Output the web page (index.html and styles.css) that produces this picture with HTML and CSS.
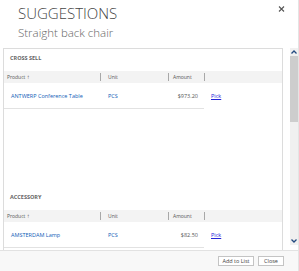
FILE: index.html
```html
<!DOCTYPE html>
<html lang="en">
<head>
  <meta charset="UTF-8">
  <title>Suggestions</title>
  <link rel="stylesheet" href="styles.css">
</head>
<body>
<div class="dialog">
  <!-- header -->
  <div class="header">
    <h1>SUGGESTIONS</h1>
    <p class="subtitle">Straight back chair</p>
    <a class="close-x" href="#">
      <svg width="7" height="6" viewBox="0 0 7 6"><path d="M1 0.5 L6 5.5 M6 0.5 L1 5.5" stroke="#555" stroke-width="1.1" fill="none"/></svg>
    </a>
  </div>

  <div class="main">
    <div class="content">
      <div class="section">
        <div class="section-title">CROSS SELL</div>
        <div class="grid grid-head">
          <div class="hcell first"><span>Product <span class="sort">&#8593;</span></span></div>
          <div class="hcell"><span class="sep">Unit</span></div>
          <div class="hcell"><span class="sep">Amount</span></div>
          <div class="hcell"><span class="sep"></span></div>
        </div>
        <div class="grid grid-row">
          <div class="cell name"><a href="#">ANTWERP Conference Table</a></div>
          <div class="cell unit"><a href="#">PCS</a></div>
          <div class="cell amount">$973.20</div>
          <div class="cell pick"><a href="#">Pick</a></div>
        </div>
      </div>

      <div class="section">
        <div class="section-title">ACCESSORY</div>
        <div class="grid grid-head">
          <div class="hcell first"><span>Product <span class="sort">&#8593;</span></span></div>
          <div class="hcell"><span class="sep">Unit</span></div>
          <div class="hcell"><span class="sep">Amount</span></div>
          <div class="hcell"><span class="sep"></span></div>
        </div>
        <div class="grid grid-row">
          <div class="cell name"><a href="#">AMSTERDAM Lamp</a></div>
          <div class="cell unit"><a href="#">PCS</a></div>
          <div class="cell amount">$82.50</div>
          <div class="cell pick"><a href="#">Pick</a></div>
        </div>
      </div>
    </div>

    <!-- scrollbar -->
    <div class="scrollbar">
      <div class="arrow">
        <svg width="6" height="4" viewBox="0 0 6 4"><path d="M0.5 3.5 L3 1 L5.5 3.5" stroke="#234a80" stroke-width="1.3" fill="none"/></svg>
      </div>
      <div class="thumb"></div>
      <div class="track"></div>
      <div class="arrow">
        <svg width="6" height="4" viewBox="0 0 6 4"><path d="M0.5 0.5 L3 3 L5.5 0.5" stroke="#234a80" stroke-width="1.3" fill="none"/></svg>
      </div>
    </div>
  </div>

  <div class="footer">
    <button type="button" class="btn-add">Add to List</button>
    <button type="button" class="btn-close">Close</button>
  </div>
</div>
</body>
</html>
```

FILE: styles.css
```css
html, body {
  margin: 0;
  padding: 0;
}

body {
  font-family: "Open Sans", "Liberation Sans", sans-serif;
  background-color: #fff;
  width: 299px;
  height: 271px;
  overflow: hidden;
}

.dialog {
  display: flex;
  flex-direction: column;
  height: 271px;
  border-right: 1px solid #e4e4e4;
  box-sizing: border-box;
}

/* header */
.header {
  position: relative;
  height: 48px;
  padding-left: 18px;
  box-sizing: border-box;
}

.header h1 {
  margin: 0;
  padding-top: 4px;
  font-size: 15px;
  line-height: 19px;
  font-weight: 300;
  color: #444;
}

.subtitle {
  margin: 2px 0 0;
  font-size: 11.5px;
  line-height: 15px;
  font-weight: 300;
  color: #666;
}

.close-x {
  position: absolute;
  top: 6px;
  right: 13px;
  display: block;
  line-height: 0;
}

/* main area */
.main {
  display: flex;
  height: 202px;
}

.content {
  margin-left: 3px;
  width: 280px;
  border: 1px solid #dcdcdc;
  border-bottom: none;
  box-sizing: border-box;
  overflow: hidden;
}

.section {
  height: 139px;
}

.section-title {
  height: 22px;
  line-height: 18px;
  padding-left: 6px;
  font-size: 5.5px;
  font-weight: bold;
  color: #666;
}

.grid {
  display: grid;
  grid-template-columns: 96px 68px 36px 1fr;
}

.grid-head {
  height: 12px;
  background-color: #f3f3f3;
  font-size: 5px;
  color: #555;
}

.hcell {
  display: flex;
  align-items: center;
}

.hcell.first {
  padding-left: 3px;
}

.sort {
  font-size: 6px;
}

.sep {
  display: block;
  height: 8px;
  line-height: 8px;
  border-left: 1px solid #a8a8a8;
  padding-left: 4px;
}

.hcell:nth-child(2) .sep {
  padding-left: 7px;
}

.grid-row {
  height: 26px;
  font-size: 5.5px;
  color: #444;
}

.cell {
  display: flex;
  align-items: center;
  border-bottom: 1px solid #e2e2e2;
}

.cell a {
  color: #1160b7;
  text-decoration: none;
}

.cell.name {
  padding-left: 7px;
}

.cell.unit {
  padding-left: 8px;
}

.cell.amount {
  justify-content: flex-end;
  padding-right: 6px;
  color: #555;
}

.cell.pick {
  border-bottom: none;
  padding-left: 7px;
}

.cell.pick a {
  color: #2424d8;
  text-decoration: underline;
}

/* scrollbar */
.scrollbar {
  margin-left: 7px;
  width: 8px;
  height: 197px;
  display: flex;
  flex-direction: column;
  background-color: #f0f0f0;
}

.arrow {
  height: 8px;
  display: flex;
  align-items: center;
  justify-content: center;
}

.thumb {
  height: 66px;
  background-color: #cdcdcd;
}

.track {
  flex: 1;
}

/* footer */
.footer {
  flex: 1;
  display: flex;
  justify-content: flex-end;
  align-items: center;
  gap: 4px;
  padding-right: 14px;
  background-color: #f8f8f8;
  border-top: 1px solid #e2e2e2;
}

.footer button {
  height: 10px;
  padding: 0;
  font-family: "Open Sans", "Liberation Sans", sans-serif;
  font-size: 5.5px;
  line-height: 8px;
  white-space: nowrap;
  color: #444;
  background-color: #fff;
  border: 1px solid #c4c4c4;
  border-radius: 0;
}

.btn-add {
  width: 36px;
}

.btn-close {
  width: 26px;
}
```
